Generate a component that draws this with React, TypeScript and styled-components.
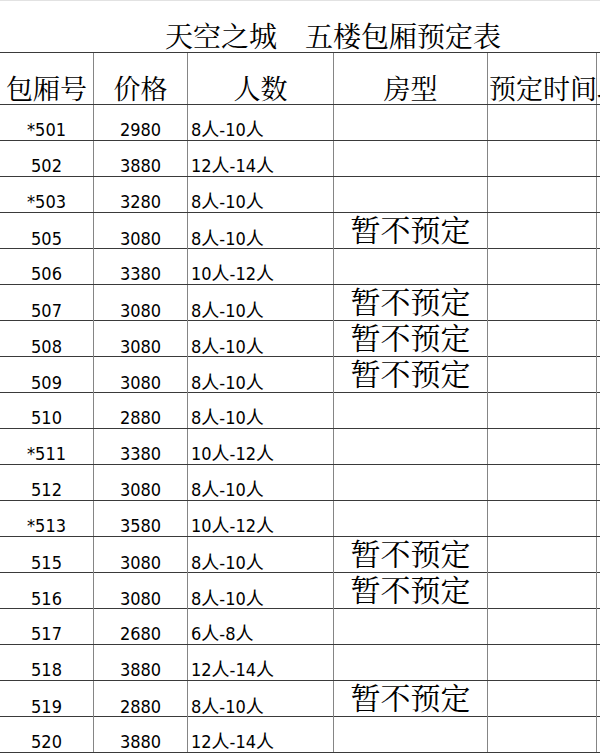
import styled, { createGlobalStyle } from 'styled-components';

const GlobalStyle = createGlobalStyle`
  html, body {
    margin: 0;
    padding: 0;
    background: #fff;
    overflow: hidden;
  }
`;

type Room = {
  no: string;
  price: string;
  people: string;
  closed?: boolean;
};

const rooms: Room[] = [
  { no: '*501', price: '2980', people: '8人-10人' },
  { no: '502', price: '3880', people: '12人-14人' },
  { no: '*503', price: '3280', people: '8人-10人' },
  { no: '505', price: '3080', people: '8人-10人', closed: true },
  { no: '506', price: '3380', people: '10人-12人' },
  { no: '507', price: '3080', people: '8人-10人', closed: true },
  { no: '508', price: '3080', people: '8人-10人', closed: true },
  { no: '509', price: '3080', people: '8人-10人', closed: true },
  { no: '510', price: '2880', people: '8人-10人' },
  { no: '*511', price: '3380', people: '10人-12人' },
  { no: '512', price: '3080', people: '8人-10人' },
  { no: '*513', price: '3580', people: '10人-12人' },
  { no: '515', price: '3080', people: '8人-10人', closed: true },
  { no: '516', price: '3080', people: '8人-10人', closed: true },
  { no: '517', price: '2680', people: '6人-8人' },
  { no: '518', price: '3880', people: '12人-14人' },
  { no: '519', price: '2880', people: '8人-10人', closed: true },
  { no: '520', price: '3880', people: '12人-14人' },
];

const SERIF_CJK = '"Noto Serif CJK SC", "Noto Sans CJK SC", serif';
const DATA_FONT = '"DejaVu Sans Condensed", "DejaVu Sans", "Noto Sans CJK SC", sans-serif';

const Sheet = styled.div`
  width: 600px;
  border-top: 1px solid #e2e2e2;
  color: #000;
`;

const TitleRow = styled.div`
  height: 52px;
  box-sizing: border-box;
  border-bottom: 1px solid #3a3a3a;
  display: flex;
  align-items: flex-end;
  padding-left: 165px;
  padding-bottom: 2px;
  font-family: ${SERIF_CJK};
  font-size: 28px;
  line-height: 30px;
  white-space: nowrap;
`;

const Row = styled.div<{ $height: number }>`
  display: grid;
  grid-template-columns: 94px 94px 146px 154px 109px 1fr;
  height: ${(p) => p.$height}px;
  box-sizing: border-box;
  border-bottom: 1px solid #3a3a3a;
`;

const Cell = styled.div<{ $align?: 'left' | 'center' }>`
  display: flex;
  align-items: flex-end;
  justify-content: ${(p) => (p.$align === 'left' ? 'flex-start' : 'center')};
  border-right: 1px solid #858585;
  white-space: nowrap;
  min-width: 0;
`;

const HeadCell = styled(Cell)`
  font-family: ${SERIF_CJK};
  font-size: 27px;
  line-height: 30px;
  padding-bottom: 1px;
  padding-left: ${(p) => (p.$align === 'left' ? '1px' : '0')};
`;

const DataCell = styled(Cell)`
  font-family: ${DATA_FONT};
  font-size: 18px;
  line-height: 18px;
  padding-bottom: 1px;
  padding-left: ${(p) => (p.$align === 'left' ? '3px' : '0')};
`;

const TypeCell = styled(Cell)`
  font-family: ${SERIF_CJK};
  font-size: 30px;
  line-height: 30px;
  padding-bottom: 6px;
`;

const EdgeCell = styled.div``;

export default function App() {
  return (
    <>
      <GlobalStyle />
      <Sheet>
        <TitleRow>天空之城　五楼包厢预定表</TitleRow>
        <Row $height={52}>
          <HeadCell>包厢号</HeadCell>
          <HeadCell>价格</HeadCell>
          <HeadCell>人数</HeadCell>
          <HeadCell>房型</HeadCell>
          <HeadCell $align="left">预定时间段</HeadCell>
          <EdgeCell />
        </Row>
        {rooms.map((r) => (
          <Row $height={36} key={r.no}>
            <DataCell>{r.no}</DataCell>
            <DataCell>{r.price}</DataCell>
            <DataCell $align="left">{r.people}</DataCell>
            <TypeCell>{r.closed ? '暂不预定' : ''}</TypeCell>
            <Cell />
            <EdgeCell />
          </Row>
        ))}
      </Sheet>
    </>
  );
}
